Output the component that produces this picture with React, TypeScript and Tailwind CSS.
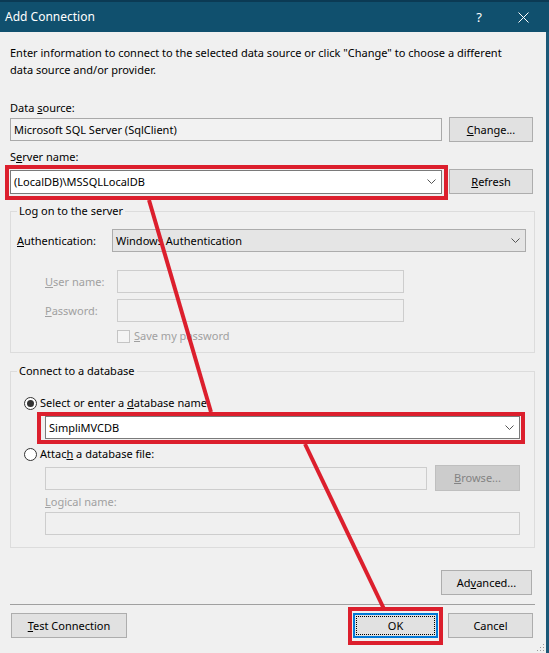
import type { ReactNode } from 'react'

function Chevron() {
  return (
    <svg width="9" height="5" viewBox="0 0 9 5" className="ml-auto shrink-0">
      <path d="M0.5 0.5 L4.5 4.5 L8.5 0.5" fill="none" stroke="#555" strokeWidth="1" />
    </svg>
  )
}

function Btn({ children, className = '' }: { children: ReactNode; className?: string }) {
  return (
    <div className={'h-[25px] flex items-center justify-center bg-[#e1e1e1] border border-[#adadad] ' + className}>
      {children}
    </div>
  )
}

export default function App() {
  return (
    <div className="relative w-[549px] h-[653px] overflow-hidden bg-[#f0f0f0] text-[11px] leading-[16px] text-black font-['Noto_Sans',sans-serif]">
      {/* title bar */}
      <div className="h-[32px] bg-[#10506e] border-t-2 border-[#0b3a54] flex items-center pl-[5px] text-white text-[12px]">
        <span>Add Connection</span>
        <span className="ml-auto mr-[36px] text-[13px]">?</span>
        <svg width="11" height="11" viewBox="0 0 11 11" className="mr-[20px]">
          <path d="M0.5 0.5 L10.5 10.5 M10.5 0.5 L0.5 10.5" stroke="#fff" strokeWidth="1" />
        </svg>
      </div>

      <div className="flex flex-col pl-[10px] pr-[11px] h-[621px] border-r-[3px] border-[#1b5877]">
        <p className="mt-[12px] leading-[17px]">
          Enter information to connect to the selected data source or click "Change" to choose a different
          <br />
          data source and/or provider.
        </p>

        <div className="mt-[22px]">
          Data <span className="underline">s</span>ource:
        </div>
        <div className="mt-[1px] flex items-center">
          <div className="w-[432px] h-[23px] border border-[#a9a9a9] bg-[#f2f2f2] flex items-center pl-[3px]">
            Microsoft SQL Server (SqlClient)
          </div>
          <Btn className="ml-[7px] w-[84px]">
            <span><span className="underline">C</span>hange...</span>
          </Btn>
        </div>

        <div className="mt-[7px]">
          S<span className="underline">e</span>rver name:
        </div>
        <div className="mt-[4px] flex items-center">
          <div className="relative w-[432px] h-[24px] border border-[#7a7a7a] bg-white flex items-center pl-[3px] pr-[5px]">
            (LocalDB)\MSSQLLocalDB
            <Chevron />
            <span className="absolute -left-[6px] -right-[7px] -top-[6px] -bottom-[7px] border-4 border-[#dc1f2d]" />
          </div>
          <Btn className="ml-[7px] w-[84px]">
            <span><span className="underline">R</span>efresh</span>
          </Btn>
        </div>

        {/* log on group */}
        <fieldset className="mt-[9px] border border-[#dcdcdc] pl-[6px] pr-[8px] pb-[8px]">
          <legend className="px-[2px]">Log on to the server</legend>
          <div className="mt-[10px] flex items-center h-[23px]">
            <span className="w-[95px] shrink-0">
              <span className="underline">A</span>uthentication:
            </span>
            <div className="flex-1 h-[23px] bg-[#e5e5e5] border border-[#acacac] flex items-center pl-[3px] pr-[5px]">
              Windows Authentication
              <Chevron />
            </div>
          </div>
          <div className="mt-[18px] flex items-center h-[23px] text-[#a0a0a0]">
            <span className="ml-[28px] w-[72px] shrink-0">
              <span className="underline">U</span>ser name:
            </span>
            <div className="w-[287px] h-[23px] border border-[#cdcdcd] bg-[#f0f0f0]" />
          </div>
          <div className="mt-[6px] flex items-center h-[23px] text-[#a0a0a0]">
            <span className="ml-[28px] w-[72px] shrink-0">
              <span className="underline">P</span>assword:
            </span>
            <div className="w-[287px] h-[23px] border border-[#cdcdcd] bg-[#f0f0f0]" />
          </div>
          <div className="mt-[6px] flex items-center h-[16px] pl-[100px] text-[#a0a0a0]">
            <span className="w-[13px] h-[13px] border border-[#c4c4c4] bg-[#f4f4f4]" />
            <span className="ml-[4px]">
              <span className="underline">S</span>ave my password
            </span>
          </div>
        </fieldset>

        {/* database group */}
        <fieldset className="mt-[10px] border border-[#dcdcdc] pl-[6px] pr-[14px] pb-[12px]">
          <legend className="px-[2px]">Connect to a database</legend>
          <div className="mt-[16px] flex items-center h-[16px] ml-[7px]">
            <span className="w-[13px] h-[13px] rounded-full border border-[#333] bg-white flex items-center justify-center">
              <span className="w-[7px] h-[7px] rounded-full bg-[#333]" />
            </span>
            <span className="ml-[3px]">
              Select or enter a <span className="underline">d</span>atabase name:
            </span>
          </div>
          <div className="relative mt-[5px] ml-[28px] h-[23px] border border-[#7a7a7a] bg-white flex items-center pl-[3px] pr-[5px]">
            SimpliMVCDB
            <Chevron />
            <span className="absolute -left-[9px] -right-[6px] -top-[5px] -bottom-[6px] border-4 border-[#dc1f2d]" />
          </div>
          <div className="mt-[7px] flex items-center h-[16px] ml-[7px]">
            <span className="w-[13px] h-[13px] rounded-full border border-[#333] bg-white" />
            <span className="ml-[3px]">
              Attac<span className="underline">h</span> a database file:
            </span>
          </div>
          <div className="mt-[3px] flex items-center h-[26px] ml-[28px]">
            <div className="w-[382px] h-[23px] border border-[#cdcdcd] bg-[#f0f0f0]" />
            <div className="ml-[8px] flex-1 h-[26px] bg-[#cccccc] border border-[#bfbfbf] flex items-center justify-center text-[#838383]">
              <span><span className="underline">B</span>rowse...</span>
            </div>
          </div>
          <div className="mt-[3px] ml-[28px] text-[#a0a0a0]">
            <span className="underline">L</span>ogical name:
          </div>
          <div className="mt-[2px] ml-[28px] h-[23px] border border-[#cdcdcd] bg-[#f0f0f0]" />
        </fieldset>

        <div className="mt-[22px] flex justify-end">
          <Btn className="w-[91px] mr-[3px]">
            <span>Ad<span className="underline">v</span>anced...</span>
          </Btn>
        </div>

        <div className="mt-[9px] h-px bg-[#a0a0a0]" />

        <div className="mt-[8px] flex items-center">
          <Btn className="ml-[1px] w-[116px]">
            <span><span className="underline">T</span>est Connection</span>
          </Btn>
          <div className="relative ml-auto w-[85px] h-[25px] bg-[#e1e1e1] border-2 border-[#0078d7] p-px">
            <div className="h-full border border-dotted border-black flex items-center justify-center">OK</div>
            <span className="absolute -left-[7px] -right-[7px] -top-[8px] -bottom-[9px] border-4 border-[#dc1f2d]" />
          </div>
          <Btn className="ml-[10px] w-[85px] mr-[2px]">Cancel</Btn>
        </div>
      </div>

      {/* annotation lines */}
      <svg className="absolute left-0 top-0 pointer-events-none" width="549" height="653">
        <line x1="149" y1="200" x2="211" y2="412" stroke="#dc1f2d" strokeWidth="4" />
        <line x1="305" y1="444" x2="384" y2="609" stroke="#dc1f2d" strokeWidth="4" />
      </svg>

      {/* resize grip */}
      <svg className="absolute right-[4px] bottom-[1px]" width="8" height="8" viewBox="0 0 8 8">
        <rect x="6" y="0" width="1" height="1" fill="#9a9a9a" />
        <rect x="3" y="3" width="1" height="1" fill="#9a9a9a" />
        <rect x="6" y="3" width="1" height="1" fill="#9a9a9a" />
        <rect x="0" y="6" width="1" height="1" fill="#9a9a9a" />
        <rect x="3" y="6" width="1" height="1" fill="#9a9a9a" />
        <rect x="6" y="6" width="1" height="1" fill="#9a9a9a" />
      </svg>
    </div>
  )
}
